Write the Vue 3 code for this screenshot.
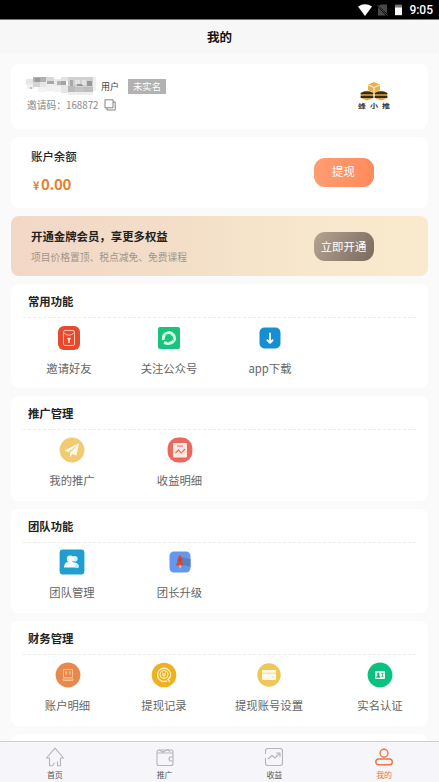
<script setup>
const sections = [
  { key: 'common', title: '常用功能', items: [
    { icon: 'invite', label: '邀请好友' },
    { icon: 'follow', label: '关注公众号' },
    { icon: 'download', label: 'app下载' },
  ] },
  { key: 'promo', title: '推广管理', items: [
    { icon: 'plane', label: '我的推广' },
    { icon: 'income', label: '收益明细' },
  ] },
  { key: 'team', title: '团队功能', items: [
    { icon: 'team', label: '团队管理' },
    { icon: 'rocket', label: '团长升级' },
  ] },
  { key: 'finance', title: '财务管理', items: [
    { icon: 'account', label: '账户明细' },
    { icon: 'record', label: '提现记录' },
    { icon: 'card', label: '提现账号设置' },
    { icon: 'verify', label: '实名认证' },
  ] },
]
const tabs = [
  { icon: 'home', label: '首页' },
  { icon: 'wallet', label: '推广' },
  { icon: 'chart', label: '收益' },
  { icon: 'me', label: '我的', active: true },
]
/* x, y, width, height, fill of each block in the masked phone number */
const mosaic = [
  [0, 3, 7, 6, '#e6e6e6'], [1, 8, 7, 5, '#efefef'], [7, 1, 13, 5, '#b0b0b0'], [9, 2, 5, 4, '#9a9a9a'],
  [7, 6, 7, 5, '#d4d4d4'], [14, 6, 7, 5, '#e6e6e6'], [20, 1, 8, 4, '#d8d8d8'], [21, 5, 8, 3, '#a8a8a8'],
  [20, 8, 8, 7, '#f0f0f0'], [28, 3, 7, 7, '#e9e9e9'], [31, 5, 6, 4, '#b4b4b4'], [35, 1, 7, 4, '#e2e2e2'],
  [35, 5, 5, 4, '#a4a4a4'], [28, 10, 7, 6, '#f2f2f2'], [35, 9, 7, 8, '#e6e6e6'], [42, 1, 25, 15, '#d0d0d0'],
  [44, 4, 3, 6, '#a8a8a8'], [49, 4, 5, 4, '#e4e4e4'], [51, 8, 6, 2, '#979797'], [56, 4, 4, 5, '#e2e2e2'],
  [61, 5, 5, 5, '#989898'], [42, 10, 7, 6, '#bababa'], [49, 11, 9, 5, '#c4c4c4'], [58, 11, 9, 5, '#bebebe'],
  [42, 16, 25, 3, '#ededed'], [67, 1, 3, 14, '#efefef'], [12, 11, 8, 5, '#f3f3f3'], [4, 11, 2, 2, '#c0c0c0'],
]
</script>

<template>
  <div class="screen">
    <div class="status">
      <svg class="wifi" viewBox="0 0 14 12"><path d="M0 2.6Q7-2.2 14 2.6L7 12Z" fill="#fff" /></svg>
      <svg class="sim" viewBox="0 0 11 12"><path d="M3.5.5H10V9.5L2 2ZM1 3L9 11.5H1Z" fill="#484848" /><path d="M.5 1L10.5 11.5" stroke="#555" /></svg>
      <svg class="battery" viewBox="0 0 8 13"><path d="M0 1H8V4H0Z" fill="#777" /><path d="M0 4H8V13H0Z" fill="#fff" /></svg>
      <span class="clock">9:05</span>
    </div>
    <header class="header">我的</header>

    <main class="content">
      <section class="card profile">
        <div class="identity">
          <div class="name-row">
            <svg class="mosaic" viewBox="0 0 70 20">
              <rect v-for="(m, i) in mosaic" :key="i" :x="m[0]" :y="m[1]" :width="m[2]" :height="m[3]" :fill="m[4]" />
            </svg>
            <span class="role">用户</span>
            <span class="badge">未实名</span>
          </div>
          <div class="code-row">
            <span>邀请码：168872</span>
            <svg class="copy" viewBox="0 0 12 12"><path d="M1 .8H9V8.8H1ZM9 3H11.2V11H3V8.8" fill="none" stroke="#777" stroke-width=".9" /></svg>
          </div>
        </div>
        <div class="brand">
          <svg class="bees" viewBox="0 0 28 20">
            <path d="M14 1L20 3.8V9L14 12L8 9V3.8Z" fill="#e9b04d" />
            <path d="M8.3 4L14 6.5L19.7 4M14 6.5V11.5" stroke="#fff1cf" stroke-width="1.1" fill="none" />
            <path d="M7 9.5L13.3 12V17L7 19.5L.7 17V12ZM21 9.5L27.3 12V17L21 19.5L14.7 17V12Z" fill="#dfa649" />
            <path d="M.7 12L4 10.6H10L13.3 12V13.2H.7ZM.7 14.8H13.3V17H.7ZM14.7 12L18 10.6H24L27.3 12V13.2H14.7ZM14.7 14.8H27.3V17H14.7Z" fill="#382a18" />
          </svg>
          <div class="brand-name"><span>蜂</span><span>小</span><span>推</span></div>
        </div>
      </section>

      <section class="card balance">
        <div>
          <div class="lead">账户余额</div>
          <div class="amount"><small>¥</small>0.00</div>
        </div>
        <button class="pill withdraw">提现</button>
      </section>

      <section class="card vip">
        <div>
          <div class="lead">开通金牌会员，享更多权益</div>
          <div class="perks">项目价格置顶、税点减免、免费课程</div>
        </div>
        <button class="pill open">立即开通</button>
      </section>

      <section v-for="s in sections" :key="s.key" class="card group">
        <h2>{{ s.title }}</h2>
        <div class="items" :class="s.key">
          <div v-for="it in s.items" :key="it.icon" class="item">
            <svg class="icon" viewBox="0 0 26 26" fill="none">
              <template v-if="it.icon === 'invite'">
                <rect x="2" y="1" width="22" height="24" rx="6" fill="#e6492d" />
                <rect x="7.5" y="5.5" width="11" height="15" rx="1.5" stroke="#ffc4ad" />
                <path d="M7.5 7.5Q13 13 18.5 7.5" stroke="#ffc4ad" />
                <path d="M11.5 13L13 14.5L14.5 13M13 14.5V18" stroke="#fff0df" stroke-width="1.5" />
              </template>
              <template v-else-if="it.icon === 'follow'">
                <rect x="2" y="2" width="22" height="22" rx="2" fill="#18c37c" />
                <g stroke="#d7ffe9" stroke-width="3">
                  <path d="M7.3 15Q6.6 8.4 13.4 7.6" /><path d="M12.5 7.2Q18.8 8.6 18.6 14.6" /><path d="M19 13.5Q16 20.4 8 17.6" />
                </g>
                <path d="M9.5 10.2L14.5 9.2M16.3 11.5L17.3 15.5M12.5 18L9 14.5" stroke="#18c37c" stroke-width=".9" />
              </template>
              <template v-else-if="it.icon === 'download'">
                <rect x="2.5" y="2.5" width="21" height="21" rx="5" fill="#168fd2" />
                <path d="M13 8.5V17" stroke="#fff" stroke-width="1.8" stroke-linecap="round" /><path d="M10 14.5L13 16L16 14.5V16L13 18.5L10 16Z" fill="#fff" stroke="#fff" stroke-width=".8" />
              </template>
              <template v-else-if="it.icon === 'plane'">
                <circle cx="13" cy="13" r="12.4" fill="#f2ca72" />
                <path d="M20 6L5.5 13.5L9.7 15.3ZM20 6L11 16V20.5L13.3 17L17.5 18.5Z" fill="#fff9e9" />
              </template>
              <template v-else-if="it.icon === 'income'">
                <rect x=".6" y=".6" width="24.8" height="24.8" rx="10.5" fill="#e9695e" />
                <rect x="6" y="6" width="14" height="14.5" rx="1" fill="#ffe8df" />
                <path d="M10 9H16M8.5 16L11.5 12.8L14.2 16L18 12" stroke="#df6b62" stroke-width="1.1" />
              </template>
              <template v-else-if="it.icon === 'team'">
                <rect x=".6" y=".6" width="24.8" height="24.8" rx="3" fill="#209ed0" />
                <circle cx="15.8" cy="9.7" r="2.8" fill="#d4f5ff" /><path d="M13 14Q19 12 20 18H13Z" fill="#d4f5ff" />
                <circle cx="11.2" cy="9.8" r="3.4" fill="#f3fdff" /><path d="M5 18.5Q5.5 13 9 12.8H13Q17 13.5 17.2 18.5Z" fill="#f3fdff" />
                <circle cx="18" cy="17.2" r="2" fill="#b9edff" />
              </template>
              <template v-else-if="it.icon === 'rocket'">
                <rect x="2.5" y="2.5" width="21" height="21" rx="4.5" fill="#6498ed" />
                <path d="M14 8L23.5 10V18L17 16Z" fill="#5580c4" />
                <path d="M13 6Q16.2 9 15.5 13L17.3 16.5H8.7L10.5 13Q9.8 9 13 6Z" fill="#d34b38" />
                <circle cx="13" cy="11" r="1.2" fill="#8a4e68" /><path d="M12 16.5H14.5L13.2 20Z" fill="#f0c8ae" />
              </template>
              <template v-else-if="it.icon === 'account'">
                <circle cx="13" cy="13" r="12.4" fill="#e8884c" />
                <path d="M8.5 7.5H17.5V15.5H8.5ZM8 17H18V18.5H8ZM10 10H12.5M11.2 10V13M14 10H16M15 10V13" stroke="#ffc99c" stroke-width=".9" />
              </template>
              <template v-else-if="it.icon === 'record'">
                <circle cx="13" cy="13" r="12.3" fill="#efb021" />
                <path d="M16 18.8A6.6 6.6 0 1 1 19.5 14.5L17 17.5L19 19.8" stroke="#fff6c5" stroke-width="1.3" />
                <circle cx="13" cy="12.5" r="4" stroke="#fff6c5" /><path d="M11 10.5L13 12.3L15 10.5M11 13H15M13 12V15.5" stroke="#fff6c5" />
              </template>
              <template v-else-if="it.icon === 'card'">
                <circle cx="13" cy="13" r="11.7" fill="#f1c658" />
                <rect x="6" y="8" width="14" height="10" rx="1" fill="#fffbe9" /><path d="M6 11.2H20M15.5 15H17.5" stroke="#f1d990" />
              </template>
              <template v-else>
                <circle cx="13" cy="13" r="12.4" fill="#0bc17f" />
                <rect x="8" y="9" width="10" height="8" rx=".8" fill="#e3ffef" />
                <path d="M9.5 15.3H13L12 13.4V11H10.7V13.4ZM14.5 11.5H16.5M14.5 14.5H16.5M15.5 11V15" fill="#28a77d" stroke="#28a77d" stroke-width=".7" />
              </template>
            </svg>
            <span>{{ it.label }}</span>
          </div>
        </div>
      </section>
      <section class="card group"></section>
    </main>

    <nav class="tabbar">
      <div v-for="t in tabs" :key="t.icon" class="tab" :class="{ active: t.active }">
        <svg viewBox="0 0 20 20" fill="none" stroke="currentColor" stroke-width="1.1" stroke-linejoin="round">
          <path v-if="t.icon === 'home'" d="M7.5 18.8H4.5V11H1.5L10 1.2L18.5 11H15.5V18.8H12.5V14.5M7.5 18.8L9.5 15.8" />
          <template v-else-if="t.icon === 'wallet'"><rect x="2" y="3" width="16" height="15.5" rx="2" /><path d="M2 6H18M4 3L8 5L13 2.5L15 5M18 10H15Q13 12 15 14H18" /></template>
          <template v-else-if="t.icon === 'chart'"><path d="M1.5 7V4Q1.5 1.5 4 1.5H16Q18.5 1.5 18.5 4V16Q18.5 18.5 16 18.5H4Q1.5 18.5 1.5 16V11M4 12L8 8.5L11 11L15.5 6.5M12 6H16V10" /></template>
          <g v-else stroke-width="1.4"><circle cx="10" cy="6.3" r="4" /><rect x="1.8" y="12" width="16.5" height="5.8" rx="2.9" /></g>
        </svg>
        <span>{{ t.label }}</span>
      </div>
    </nav>
  </div>
</template>

<style>
body { margin: 0; background: #fafafa; }
</style>

<style scoped>
.screen { width: 439px; height: 782px; overflow: hidden; display: flex; flex-direction: column; background: #fafafa; font-family: "Noto Sans CJK SC", sans-serif; color: #222; }
.status { height: 19px; flex: none; display: flex; align-items: center; justify-content: flex-end; padding-right: 6px; background: #000; border-bottom: 1px solid #77776b; box-sizing: content-box; }
.wifi { width: 14px; height: 12px; margin-right: 5px; }
.sim { width: 11px; height: 12px; margin-right: 7px; }
.battery { width: 7px; height: 13px; margin-right: 7px; }
.clock { font: 500 12px/18px Roboto, sans-serif; color: #fff; padding-top: 1px; }
.header { height: 34px; flex: none; background: #f7f7f7; text-align: center; font-size: 12.5px; font-weight: 700; line-height: 34px; color: #111; }
.content { flex: 1; min-height: 0; overflow: hidden; padding: 10px 11px 0; display: flex; flex-direction: column; gap: 8px; }
.card { flex: none; box-sizing: border-box; background: #fff; border-radius: 8px; }
.profile { height: 65px; display: flex; justify-content: space-between; padding: 12px 32px 0 15px; }
.name-row { display: flex; align-items: center; height: 20px; }
.mosaic { width: 70px; height: 20px; margin-right: 5px; }
.role { font-size: 9px; color: #444; width: 27px; }
.badge { width: 38px; height: 15px; background: #b2b2b2; color: #fff; font-size: 9.4px; line-height: 15px; text-align: center; }
.code-row { display: flex; align-items: center; height: 18px; font-size: 9.75px; color: #888; padding-left: 1px; gap: 6px; }
.copy { width: 12px; height: 12px; }
.brand { width: 44px; display: flex; flex-direction: column; align-items: center; padding-top: 5px; }
.bees { width: 28px; height: 20px; }
.brand-name { display: flex; gap: 4px; font-size: 8px; line-height: 10px; font-weight: 700; color: #333; transform: scale(1, .75); }
.balance, .vip { display: flex; justify-content: space-between; padding: 0 54px 0 20px; }
.balance { height: 71px; }
.lead { font-size: 11.4px; font-weight: 700; line-height: 20px; }
.balance .lead { margin-top: 9px; font-weight: 500; }
.amount { margin-top: 7px; color: #e2812f; font: 700 15px/22px "Noto Sans CJK SC", sans-serif; letter-spacing: -.4px; }
.amount small { display: inline-block; width: 10px; font-size: 11px; text-align: center; }
.pill { width: 60px; height: 29px; padding: 0 1px 1px 0; border: 0; border-radius: 11px; color: #fff; font-family: inherit; font-size: 11.4px; line-height: 27px; text-align: center; }
.withdraw { margin-top: 20.5px; background: linear-gradient(100deg, #ff9e72, #fe8a5b); }
.vip { height: 60px; background: linear-gradient(90deg, #f2d7c7 0%, #f3dec8 40%, #f7e7cc 70%, #f9e9cd 100%); }
.vip .lead { margin-top: 9.5px; }
.perks { font-size: 9.75px; line-height: 18px; color: #a0958a; margin-top: 2px; }
.open { margin-top: 16px; background: linear-gradient(120deg, #b4a491, #786a5e); }
.group { height: 104.4px; }
.group h2 { margin: 0 12px; padding-left: 5px; height: 33px; line-height: 35px; font-size: 11.35px; font-weight: 700; border-bottom: 1px dashed #ececec; }
.items { display: grid; }
.common { grid-template-columns: 116px 84px 118px; }
.promo, .team { grid-template-columns: 122px 93px; }
.finance { grid-template-columns: 113px 80px 130px 92px; }
.item { display: flex; flex-direction: column; align-items: center; padding-top: 6.5px; font-size: 11.35px; line-height: 20px; color: #666; }
.icon { width: 26px; height: 26px; margin-bottom: 7px; }
.tabbar { height: 40px; flex: none; display: flex; background: #f5f5fa; border-top: 1px solid #cfcfd3; }
.tab { flex: 1; display: flex; flex-direction: column; align-items: center; padding-top: 5px; font-size: 8px; line-height: 12px; color: #555; }
.tab svg { width: 20px; height: 20px; color: #b5b5b9; margin-bottom: 2px; }
.tab.active, .tab.active svg { color: #ed7345; }
</style>
